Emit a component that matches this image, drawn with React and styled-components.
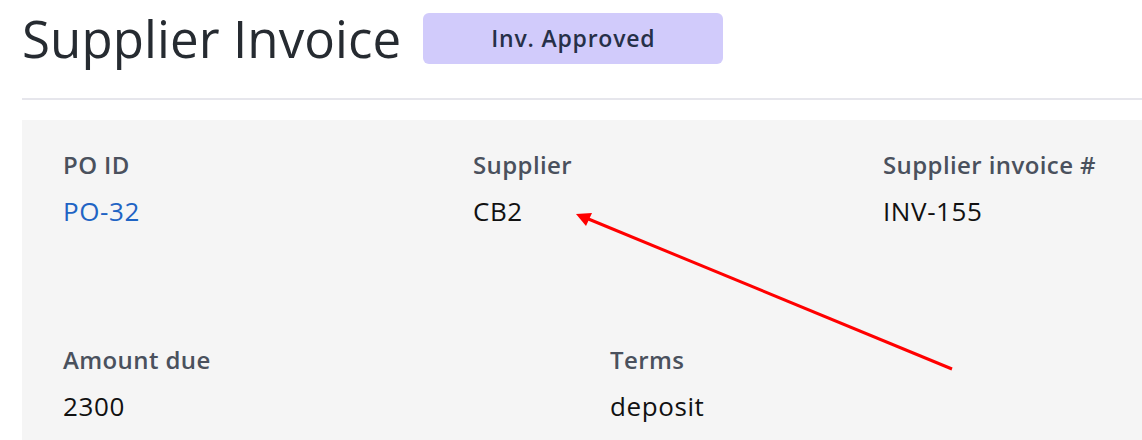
import React from "react";
import styled, { createGlobalStyle } from "styled-components";

const Global = createGlobalStyle`
  html, body { margin: 0; padding: 0; background: #ffffff; }
  body { font-family: "Open Sans", Lato, sans-serif; overflow: hidden; }
`;

const Page = styled.div`
  position: relative;
  width: 1142px;
  height: 440px;
  overflow: hidden;
  padding-left: 22px;
  box-sizing: border-box;
`;

const Header = styled.header`
  display: flex;
  align-items: center;
  gap: 22px;
  height: 76px;
`;

const Title = styled.h1`
  margin: 0;
  font-size: 51px;
  font-weight: 400;
  color: #262b31;
  letter-spacing: 0.1px;
`;

const Badge = styled.span`
  display: inline-flex;
  align-items: center;
  justify-content: center;
  width: 300px;
  height: 51px;
  border-radius: 6px;
  background: #d1cbfb;
  color: #263048;
  font-size: 23px;
  font-weight: 600;
  letter-spacing: 0.8px;
`;

const Divider = styled.hr`
  margin: 22px 0 0 0;
  border: 0;
  height: 2px;
  background: #e6e6ec;
`;

const Panel = styled.section`
  margin-top: 20px;
  background: #f5f5f5;
  padding: 28px 0 40px 41px;
  min-height: 320px;
`;

const Row = styled.div`
  display: grid;
  grid-template-columns: repeat(${(p) => p.$cols}, ${(p) => p.$width}px);
  margin-bottom: ${(p) => p.$gap || 0}px;
`;

const Field = styled.div`
  display: flex;
  flex-direction: column;
  gap: 12px;
`;

const Label = styled.div`
  font-size: 24px;
  font-weight: 600;
  color: #4a515d;
  letter-spacing: 0.4px;
`;

const Value = styled.div`
  font-size: 26px;
  font-weight: 400;
  letter-spacing: 0.6px;
  color: ${(p) => (p.$link ? "#1f64c4" : "#111111")};
`;

const Arrow = styled.svg`
  position: absolute;
  left: 0;
  top: 0;
  pointer-events: none;
`;

export default function App() {
  return (
    <Page>
      <Global />
      <Header>
        <Title>Supplier Invoice</Title>
        <Badge>Inv. Approved</Badge>
      </Header>
      <Divider />
      <Panel>
        <Row $cols={3} $width={410} $gap={114}>
          <Field>
            <Label>PO ID</Label>
            <Value $link>PO-32</Value>
          </Field>
          <Field>
            <Label>Supplier</Label>
            <Value>CB2</Value>
          </Field>
          <Field>
            <Label>Supplier invoice #</Label>
            <Value>INV-155</Value>
          </Field>
        </Row>
        <Row $cols={2} $width={547}>
          <Field>
            <Label>Amount due</Label>
            <Value>2300</Value>
          </Field>
          <Field>
            <Label>Terms</Label>
            <Value>deposit</Value>
          </Field>
        </Row>
      </Panel>
      <Arrow width="1142" height="440" viewBox="0 0 1142 440">
        <line x1="952" y1="369" x2="586" y2="218" stroke="#ff0000" strokeWidth="3" />
        <polygon points="576,214 592,213 586,226" fill="#ff0000" />
      </Arrow>
    </Page>
  );
}
